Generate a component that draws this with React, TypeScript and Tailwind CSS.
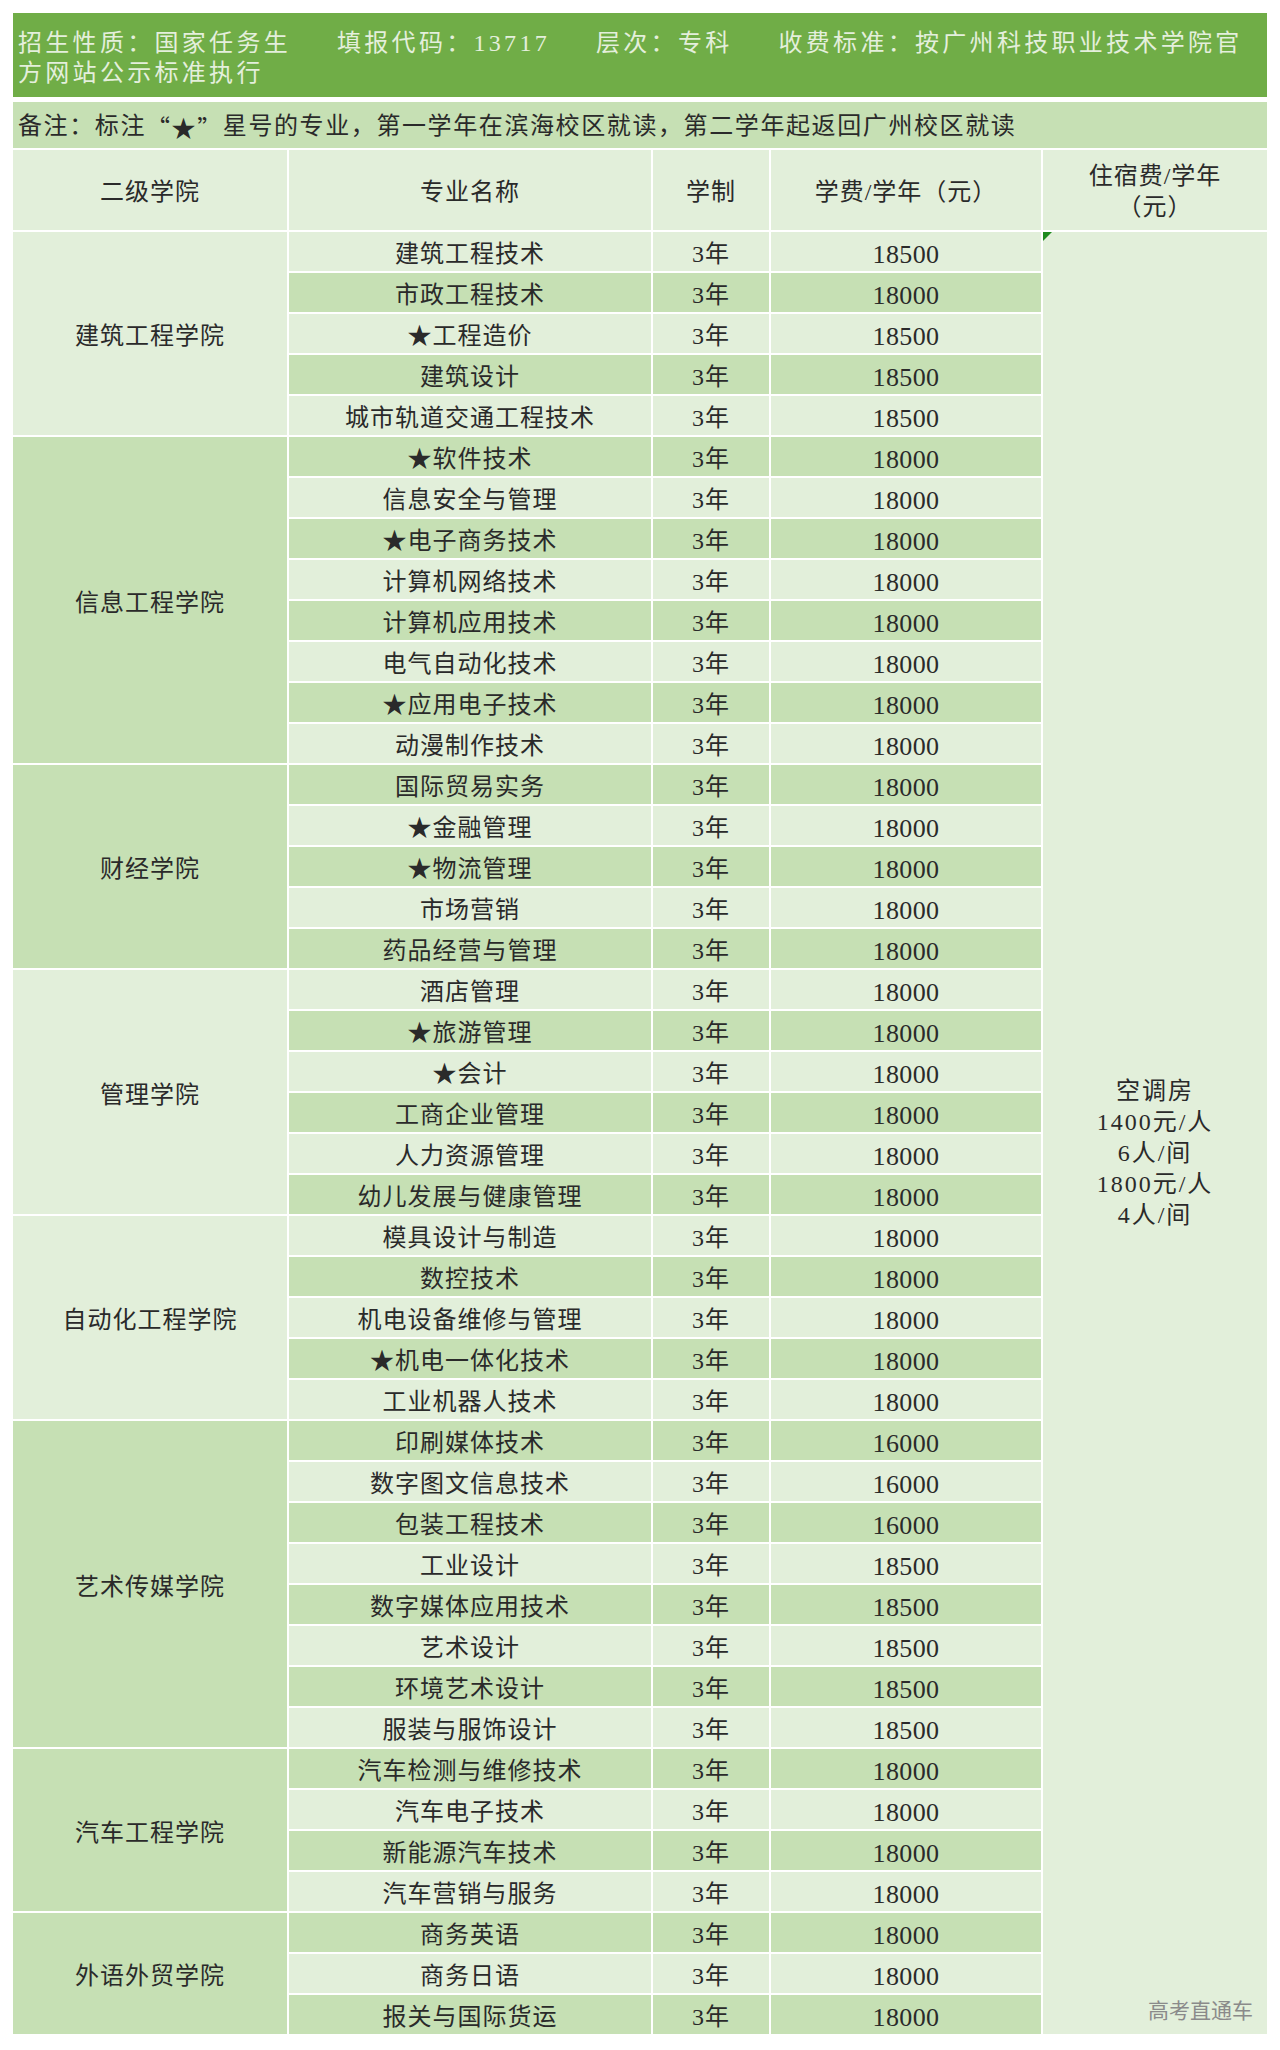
const LIGHT = 'bg-[#e2efda]'
const MID = 'bg-[#c6e0b4]'

type Group = {
  name: string
  bg: string
  span: string
  majors: [string, number][]
}

const groups: Group[] = [
  {
    name: '建筑工程学院',
    bg: LIGHT,
    span: 'row-span-5',
    majors: [
      ['建筑工程技术', 18500],
      ['市政工程技术', 18000],
      ['★工程造价', 18500],
      ['建筑设计', 18500],
      ['城市轨道交通工程技术', 18500],
    ],
  },
  {
    name: '信息工程学院',
    bg: MID,
    span: 'row-span-8',
    majors: [
      ['★软件技术', 18000],
      ['信息安全与管理', 18000],
      ['★电子商务技术', 18000],
      ['计算机网络技术', 18000],
      ['计算机应用技术', 18000],
      ['电气自动化技术', 18000],
      ['★应用电子技术', 18000],
      ['动漫制作技术', 18000],
    ],
  },
  {
    name: '财经学院',
    bg: MID,
    span: 'row-span-5',
    majors: [
      ['国际贸易实务', 18000],
      ['★金融管理', 18000],
      ['★物流管理', 18000],
      ['市场营销', 18000],
      ['药品经营与管理', 18000],
    ],
  },
  {
    name: '管理学院',
    bg: LIGHT,
    span: 'row-span-6',
    majors: [
      ['酒店管理', 18000],
      ['★旅游管理', 18000],
      ['★会计', 18000],
      ['工商企业管理', 18000],
      ['人力资源管理', 18000],
      ['幼儿发展与健康管理', 18000],
    ],
  },
  {
    name: '自动化工程学院',
    bg: LIGHT,
    span: 'row-span-5',
    majors: [
      ['模具设计与制造', 18000],
      ['数控技术', 18000],
      ['机电设备维修与管理', 18000],
      ['★机电一体化技术', 18000],
      ['工业机器人技术', 18000],
    ],
  },
  {
    name: '艺术传媒学院',
    bg: MID,
    span: 'row-span-8',
    majors: [
      ['印刷媒体技术', 16000],
      ['数字图文信息技术', 16000],
      ['包装工程技术', 16000],
      ['工业设计', 18500],
      ['数字媒体应用技术', 18500],
      ['艺术设计', 18500],
      ['环境艺术设计', 18500],
      ['服装与服饰设计', 18500],
    ],
  },
  {
    name: '汽车工程学院',
    bg: MID,
    span: 'row-span-4',
    majors: [
      ['汽车检测与维修技术', 18000],
      ['汽车电子技术', 18000],
      ['新能源汽车技术', 18000],
      ['汽车营销与服务', 18000],
    ],
  },
  {
    name: '外语外贸学院',
    bg: MID,
    span: 'row-span-3',
    majors: [
      ['商务英语', 18000],
      ['商务日语', 18000],
      ['报关与国际货运', 18000],
    ],
  },
]

const cell = 'flex items-center justify-center text-center'
const cjk = { fontFamily: '"Noto Sans CJK SC", sans-serif' }

function Gap() {
  return <span className="inline-block w-[46px]" />
}

export default function App() {
  let rowIndex = 0

  return (
    <div
      className="min-h-[2050px] bg-white px-[13px] pt-[13px] text-[24px] leading-[31px] tracking-[1px] text-[#2a2a2a]"
      style={{ fontFamily: '"Liberation Serif", "Noto Sans CJK SC", serif' }}
    >
      <div className="h-[84px] bg-[#70ad47] pl-[5px] pt-[15px] text-[24px] leading-[30px] tracking-[3.3px] text-[#e4efdc]">
        <div className="whitespace-nowrap">
          招生性质：国家任务生
          <Gap />
          填报代码：13717
          <Gap />
          层次：专科
          <Gap />
          收费标准：按广州科技职业技术学院官
        </div>
        <div>方网站公示标准执行</div>
      </div>

      <div className="mt-[5px] flex h-[46px] items-center bg-[#c6e0b4] pl-[5px] pt-[2px] tracking-[1.6px]">
        备注：标注<span style={cjk}>“★”</span>星号的专业，第一学年在滨海校区就读，第二学年起返回广州校区就读
      </div>

      <div className="mt-[2px] grid grid-cols-[274px_362px_116px_270px_224px] grid-rows-[80px_repeat(44,39px)] gap-[2px] bg-white">
        <div className={`${cell} ${LIGHT} pt-[4px]`}>二级学院</div>
        <div className={`${cell} ${LIGHT} pt-[4px]`}>专业名称</div>
        <div className={`${cell} ${LIGHT} pt-[4px]`}>学制</div>
        <div className={`${cell} ${LIGHT} pt-[4px]`}>学费/学年（元）</div>
        <div className={`${cell} ${LIGHT} flex-col pt-[4px]`}>
          <span>住宿费/学年</span>
          <span>（元）</span>
        </div>

        {groups.map((group, gi) => (
          <div key={group.name} className="contents">
            <div className={`${cell} ${group.bg} ${group.span} col-start-1 pt-[6px]`}>{group.name}</div>
            {group.majors.map(([major, fee], mi) => {
              const bg = rowIndex % 2 === 0 ? LIGHT : MID
              rowIndex += 1
              return (
                <div key={major} className="contents">
                  <div className={`${cell} ${bg} col-start-2 pt-[6px]`}>{major}</div>
                  <div className={`${cell} ${bg} col-start-3 pt-[6px]`}>3年</div>
                  <div className={`${cell} ${bg} col-start-4 pt-[6px] text-[26px] tracking-[0.4px]`}>{fee}</div>
                  {gi === 0 && mi === 0 && (
                    <div className={`${cell} ${LIGHT} relative col-start-5 row-span-44 flex-col pt-[40px] tracking-[2px]`}>
                      <span className="absolute left-0 top-0 h-0 w-0 border-r-[9px] border-t-[9px] border-r-transparent border-t-[#1e8a1e]" />
                      <span>空调房</span>
                      <span>1400元/人</span>
                      <span>6人/间</span>
                      <span>1800元/人</span>
                      <span>4人/间</span>
                      <span
                        className="absolute bottom-[14px] right-[14px] text-[21px] leading-none tracking-[0px] text-[#8a8a8a]"
                        style={cjk}
                      >
                        高考直通车
                      </span>
                    </div>
                  )}
                </div>
              )
            })}
          </div>
        ))}
      </div>
    </div>
  )
}
